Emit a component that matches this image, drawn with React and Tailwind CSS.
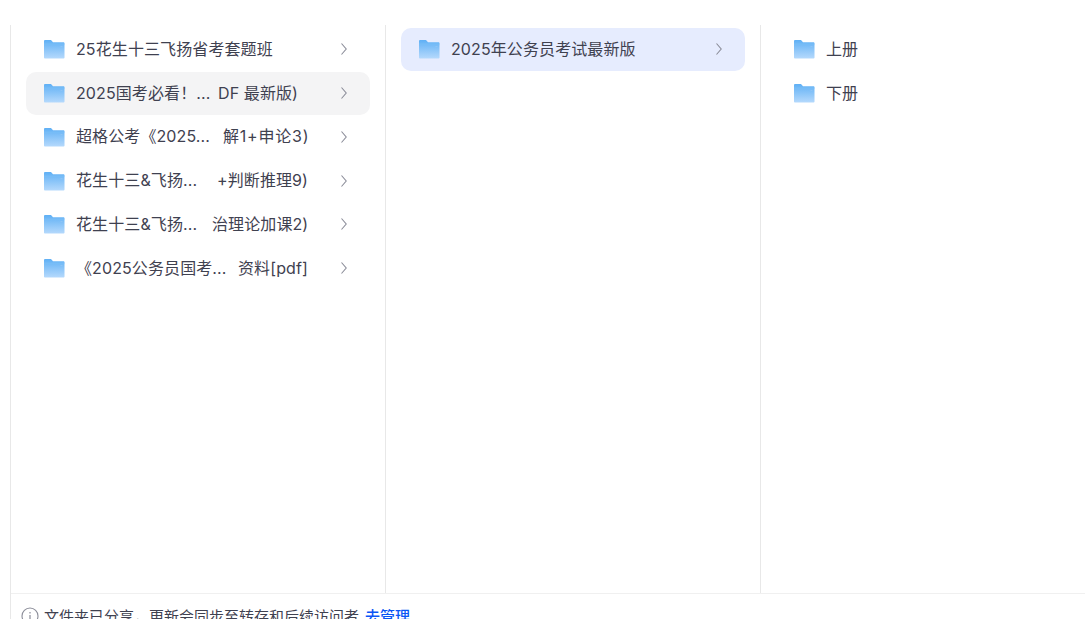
import React from "react";

const Folder = () => (
  <svg width="22" height="20" viewBox="0 0 22 20" className="shrink-0">
    <defs>
      <linearGradient id="fg" x1="0" y1="0" x2="0" y2="1">
        <stop offset="0" stopColor="#5fb0f5" />
        <stop offset="1" stopColor="#b5d9fc" />
      </linearGradient>
    </defs>
    <path d="M1 2.2C1 1.5 1.5 1 2.2 1H8l2 2.2h10.4c.7 0 1.1.5 1.1 1.1V18.4c0 .6-.5 1.1-1.1 1.1H2.2c-.7 0-1.2-.5-1.2-1.1V2.2Z" fill="url(#fg)" />
    <path d="M1 4.6h20.5v1H1z" fill="#7cc0f8" opacity="0.7" />
    <rect x="17.5" y="7" width="2" height="1" fill="#8fc4f5" />
  </svg>
);

const Chevron = () => (
  <svg width="8" height="14" viewBox="0 0 8 14" className="shrink-0" fill="none">
    <path d="M1.5 1.5 6.2 7l-4.7 5.5" stroke="#8b8d99" strokeWidth="1.1" />
  </svg>
);

const Row = ({ name, tail, nameClass = "", tailClass = "", active, hover, chevron = true }) => (
  <div className={`flex items-center h-[43px] rounded-[10px] pl-[17px] pr-[22px] ${active ? "bg-[#e6ecfe]" : hover ? "bg-[#f4f4f5]" : ""}`}>
    <Folder />
    <div className="ml-[11px] -mt-[1px] flex-1 flex text-[16px] leading-[24px] tracking-[0.1px] text-[#3f4150] whitespace-pre">
      <span className={nameClass}>{name}</span>
      {tail && <span className={tailClass}>{tail}</span>}
    </div>
    {chevron && <Chevron />}
  </div>
);

const col1 = [
  { name: "25花生十三飞扬省考套题班" },
  { name: "2025国考必看！...", tail: "DF 最新版)", hover: true, nameClass: "w-[142px]" },
  { name: "超格公考《2025...", tail: "解1+申论3)", nameClass: "w-[147px]", tailClass: "tracking-[0.8px]" },
  { name: "花生十三&飞扬...", tail: "+判断推理9)", nameClass: "w-[141px]" },
  { name: "花生十三&飞扬...", tail: "治理论加课2)", nameClass: "w-[136px]" },
  { name: "《2025公务员国考...", tail: "资料[pdf]", nameClass: "w-[162px]" },
];

export default function App() {
  return (
    <div className="h-[619px] w-[1085px] overflow-hidden bg-white pt-[25px] pl-[10px] font-['Inter','Noto_Sans_CJK_SC',sans-serif]">
      <div className="h-[594px] flex flex-col border-l border-[#e8e8e8]">
        <div className="h-[568px] flex shrink-0">
          <div className="w-[375px] shrink-0 border-r border-[#e8e8e8] px-[15px] pt-[2.8px] flex flex-col gap-[0.8px]">
            {col1.map((r, i) => <Row key={i} {...r} />)}
          </div>
          <div className="w-[375px] shrink-0 border-r border-[#e8e8e8] px-[15px] pt-[2.8px] flex flex-col">
            <Row name="2025年公务员考试最新版" active />
          </div>
          <div className="flex-1 px-[15px] pt-[2.8px] flex flex-col gap-[0.8px]">
            <Row name="上册" chevron={false} />
            <Row name="下册" chevron={false} />
          </div>
        </div>
        <div className="flex items-start h-[40px] border-t border-[#f0f0f0] pl-[10px] pt-[12px] text-[15px] leading-[22px] text-[#3f4150]">
          <svg width="18" height="18" viewBox="0 0 18 18" fill="none" className="mt-[1px] shrink-0">
            <circle cx="9" cy="9" r="8" stroke="#8b8d99" strokeWidth="1.1" />
            <path d="M9 8v5M9 5v1.4" stroke="#8b8d99" strokeWidth="1.2" />
          </svg>
          <span className="ml-[5px] whitespace-pre">文件夹已分享，更新会同步至转存和后续访问者</span>
          <span className="ml-[6px] text-[#0a56f5] font-medium">去管理</span>
        </div>
      </div>
    </div>
  );
}
